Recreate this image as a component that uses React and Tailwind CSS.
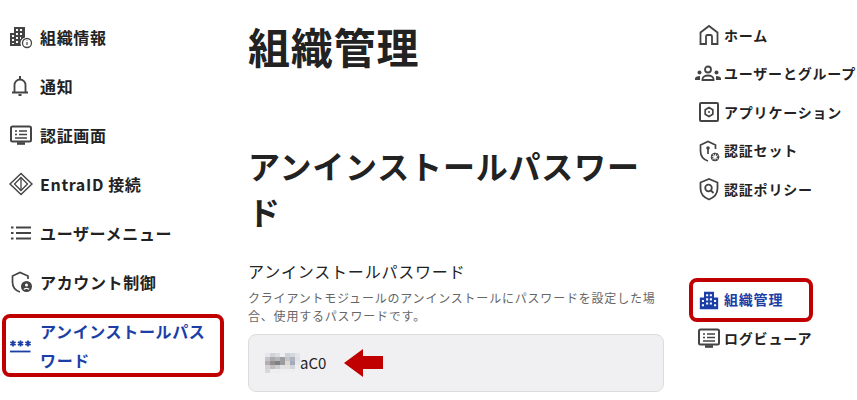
const FONT = "font-['Noto_Sans_CJK_JP','Noto_Sans',sans-serif]";

function Svg({ children, size = 24, className = "text-[#444]" }) {
  return (
    <svg width={size} height={size} viewBox="0 0 24 24" fill="none" stroke="currentColor" strokeWidth="2" className={`shrink-0 ${className}`}>
      {children}
    </svg>
  );
}

const OrgInfoIcon = () => (
  <Svg>
    <path fill="currentColor" stroke="none" fillRule="evenodd" d="M1 21V8h4V2h11v10.500a6 6 0 0 0-4 8.500H1zM3 10v2h2v-2H3zm0 4v2h2v-2H3zm0 4v1h2v-1H3zM7 4v2h2V4H7zm4 0v2h2V4h-2zM7 8v2h2V8H7zm4 0v2h2V8h-2zM7 12v2h2v-2H7zm4 0v2h1v-2h-1zM7 16v2h2v-2H7z" />
    <circle cx="18" cy="18" r="4.500" strokeWidth="1.300" />
    <path d="M18 17v3M18 15.500v.5" strokeWidth="1.200" />
  </Svg>
);

const BellIcon = () => (
  <Svg>
    <path strokeWidth="1.800" d="M3 18.500h16M5.500 18.500V11a5.500 5.500 0 0 1 11 0v7.500" />
    <path strokeWidth="2" d="M11 2v3.500M9.500 21h3" />
  </Svg>
);

const ScreenIcon = ({ className }) => (
  <Svg className={className}>
    <rect x="2" y="3.500" width="20" height="15" rx="1.500" />
    <path d="M6 8h2M10 8h8M6 11.500h2M10 11.500h8M6 15h12" strokeWidth="1.600" />
    <path d="M8 20.500h8" strokeWidth="2.600" />
  </Svg>
);

const EntraIcon = () => (
  <Svg>
    <path strokeWidth="1.500" d="M12 1.500 23 12 12 22.500 1 12z" />
    <path strokeWidth="1.300" d="M12 5.500 18.500 12 12 18.500 5.500 12z" />
    <path strokeWidth="1.300" d="M12 5.500v13" />
  </Svg>
);

const ListIcon = () => (
  <Svg>
    <path strokeWidth="1.900" d="M7 6.500h15M7 12h15M7 17.500h15" />
    <path strokeWidth="2" d="M2 6.500h2.500M2 12h2.500M2 17.500h2.500" />
  </Svg>
);

const ShieldUserIcon = () => (
  <Svg>
    <path strokeWidth="1.700" d="M11 22C6.500 20.500 3.500 16.500 3.500 12V6L11 2.500 19 6v3" />
    <circle cx="17.500" cy="16.500" r="5.500" fill="currentColor" stroke="none" />
    <circle cx="17.500" cy="15" r="1.500" fill="white" stroke="none" />
    <path d="M15 19.500c.5-1.500 4.500-1.500 5 0" stroke="white" strokeWidth="1.300" />
  </Svg>
);

const DotsIcon = () => (
  <Svg className="text-[#1b3fa6]">
    <path strokeWidth="1.800" d="M1 17.500h20.500" />
    <path strokeWidth="1.800" d="M4 6.500v6M1.400 8l5.200 3M6.600 8l-5.200 3M11.500 6.500v6M8.900 8l5.200 3M14.100 8l-5.200 3M19 6.500v6M16.400 8l5.200 3M21.600 8l-5.200 3" />
  </Svg>
);

const HomeIcon = () => (
  <Svg>
    <path strokeWidth="1.800" d="M3.500 21V9.500L12 3l8.500 6.500V21h-5.500v-7.500a1.500 1.500 0 0 0-1.500-1.500h-3A1.500 1.500 0 0 0 9 13.500V21H3.500z" />
  </Svg>
);

const UsersIcon = () => (
  <svg width="28" height="24" viewBox="0 0 28 24" className="shrink-0 text-[#444]" fill="none" stroke="currentColor">
    <circle cx="14" cy="7.500" r="3" strokeWidth="1.800" />
    <path strokeWidth="1.800" d="M8.500 18v-1c0-2 2.500-3.500 5.500-3.500s5.500 1.500 5.500 3.500v1z" />
    <circle cx="5.500" cy="10.500" r="2" fill="currentColor" stroke="none" />
    <circle cx="22.500" cy="10.500" r="2" fill="currentColor" stroke="none" />
    <path fill="currentColor" stroke="none" d="M1 18v-1.500c0-1.500 2-2.500 5-2.500v4zM27 18v-1.500c0-1.500-2-2.500-5-2.500v4z" />
  </svg>
);

const AppIcon = () => (
  <Svg>
    <rect x="3" y="3" width="18" height="18" rx="1" />
    <path strokeWidth="1.700" d="M12 7.500l3.800 2.200v4.600L12 16.500l-3.800-2.200V9.700z" />
    <circle cx="12" cy="12" r="1" fill="currentColor" stroke="none" />
  </Svg>
);

const ShieldKeyIcon = () => (
  <Svg>
    <path strokeWidth="1.700" d="M11 22C6.500 20.500 3.500 16.500 3.500 12V6L11 2.500 18.500 6v4" />
    <circle cx="11" cy="9" r="1.800" fill="currentColor" stroke="none" />
    <path strokeWidth="1.700" d="M11 10v5" />
    <circle cx="18" cy="18" r="3" strokeWidth="2.500" strokeDasharray="1.500 1" />
    <circle cx="18" cy="18" r="3.800" strokeWidth="1" />
  </Svg>
);

const ShieldSearchIcon = () => (
  <Svg>
    <path strokeWidth="1.800" d="M12 22.500C7 20.500 3.500 16.500 3.500 11.500V5.500L12 2l8.500 3.500v6c0 5-3.500 9-8.500 11z" />
    <circle cx="11.500" cy="11" r="3.300" strokeWidth="1.800" />
    <path strokeWidth="1.800" d="M14 13.500l2.500 2.500" />
  </Svg>
);

const OrgIcon = () => (
  <Svg size={20} className="mx-[2px] text-[#1b3fa6]">
    <path fill="currentColor" stroke="none" fillRule="evenodd" d="M1 23V9h5V2h12v7h5v14H1zM3.500 12v2.500H6V12H3.500zm0 5v2.500H6V17H3.500zM8.500 5v2.500H11V5H8.500zM13 5v2.500h2.500V5H13zM8.500 10v2.500H11V10H8.500zM13 10v2.500h2.500V10H13zM8.500 15v2.500H11V15H8.500zM13 15v2.500h2.500V15H13zM18 12v2.500h2.500V12H18zM18 17v2.500h2.500V17H18z" />
  </Svg>
);

const leftNav = [
  { label: "組織情報", icon: <OrgInfoIcon /> },
  { label: "通知", icon: <BellIcon /> },
  { label: "認証画面", icon: <ScreenIcon /> },
  { label: "EntraID 接続", icon: <EntraIcon /> },
  { label: "ユーザーメニュー", icon: <ListIcon /> },
  { label: "アカウント制御", icon: <ShieldUserIcon /> },
];

const rightNav = [
  { label: "ホーム", icon: <HomeIcon /> },
  { label: "ユーザーとグループ", icon: <UsersIcon />, wide: true },
  { label: "アプリケーション", icon: <AppIcon /> },
  { label: "認証セット", icon: <ShieldKeyIcon /> },
  { label: "認証ポリシー", icon: <ShieldSearchIcon /> },
];

// pixelated part of the password
const mosaic = [
  ["#e4e6ea", "#d0d2d8", "#dcdce2", "#eceef0", "#cfd1d8", "#d4d8df", "#e2e4e8"],
  ["#c4c3c8", "#aaa9ae", "#b6b5bb", "#9e9da4", "#c4c6cc", "#aeb4c0", "#dfe1e6"],
  ["#b2aeb2", "#92908f", "#807f85", "#9c9a9f", "#e0d6d0", "#a2acbd", "#e6e7ea"],
  ["#d4d1d3", "#c0bec0", "#cecccf", "#e2e2e5", "#e6e0dc", "#d0d5dc", "#eeeef1"],
  ["#d8d7da", "#eeeef1", "#eeeef1", "#eeeef1", "#eeeef1", "#eeeef1", "#f0f0f3"],
];

function Mosaic() {
  return (
    <svg width="35" height="20" viewBox="0 0 35 20" className="shrink-0">
      {mosaic.map((row, y) =>
        row.map((c, x) => <rect key={`${x}-${y}`} x={x * 5} y={y * 4} width="5" height="4" fill={c} />)
      )}
    </svg>
  );
}

export default function App() {
  return (
    <div className={`${FONT} flex h-[400px] w-[857px] overflow-hidden bg-white text-[#222] tracking-[0.05em]`}>
      <aside className="w-[248px] shrink-0 pl-[9px] pt-[12px]">
        {leftNav.map((item) => (
          <div key={item.label} className="flex h-[49px] items-center gap-[7px] text-[16px] font-bold tracking-[0.04em]">
            {item.icon}
            <span>{item.label}</span>
          </div>
        ))}
        <div className="relative mt-[8px] flex h-[63px] w-[214px] items-center gap-[7px] text-[16px] font-bold leading-[29px] tracking-[0.04em] text-[#1b3fa6]">
          <DotsIcon />
          <span className="w-[176px]">アンインストールパスワード</span>
          <div className="absolute -left-[7px] top-0 h-[63px] w-[222px] rounded-[8px] border-[4px] border-[#c00000]" />
        </div>
      </aside>

      <main className="w-[416px] shrink-0">
        <h1 className="mt-[16px] text-[42px] font-bold leading-[60px]">組織管理</h1>
        <h2 className="mt-[66px] text-[32px] font-bold leading-[46px]">アンインストールパスワード</h2>
        <h3 className="mt-[25px] text-[16px] leading-[24px]">アンインストールパスワード</h3>
        <p className="mt-[6px] text-[12px] leading-[18px] text-[#666]">
          クライアントモジュールのアンインストールにパスワードを設定した場合、使用するパスワードです。
        </p>
        <div className="mt-[9px] flex h-[58px] items-center rounded-[8px] border border-[#dcdcdc] bg-[#f0f0f3] pl-[16px]">
          <Mosaic />
          <span className="text-[15px] tracking-normal">aC0</span>
          <svg width="40" height="28" viewBox="0 0 40 28" className="ml-[18px] shrink-0">
            <polygon points="0,14 19,0 19,7 39,7 39,20 19,20 19,28" fill="#c00000" />
          </svg>
        </div>
      </main>

      <aside className="ml-[32px] flex-1 pt-[16px]">
        {rightNav.map((item) => (
          <div key={item.label} className={`flex h-[38.500px] items-center text-[14px] font-bold ${item.wide ? "-ml-[2px] gap-[2px]" : "ml-[1px] gap-[3px]"}`}>
            {item.icon}
            <span className="whitespace-nowrap">{item.label}</span>
          </div>
        ))}
        <div className="relative mt-[72px] ml-[1px] flex h-[38.500px] items-center gap-[3px] text-[14px] font-bold text-[#1b3fa6]">
          <OrgIcon />
          <span>組織管理</span>
          <div className="absolute -left-[8px] -top-[3px] h-[44px] w-[124px] rounded-[8px] border-[4px] border-[#c00000]" />
        </div>
        <div className="ml-[1px] flex h-[38.500px] items-center gap-[3px] text-[14px] font-bold">
          <ScreenIcon />
          <span>ログビューア</span>
        </div>
      </aside>
    </div>
  );
}
